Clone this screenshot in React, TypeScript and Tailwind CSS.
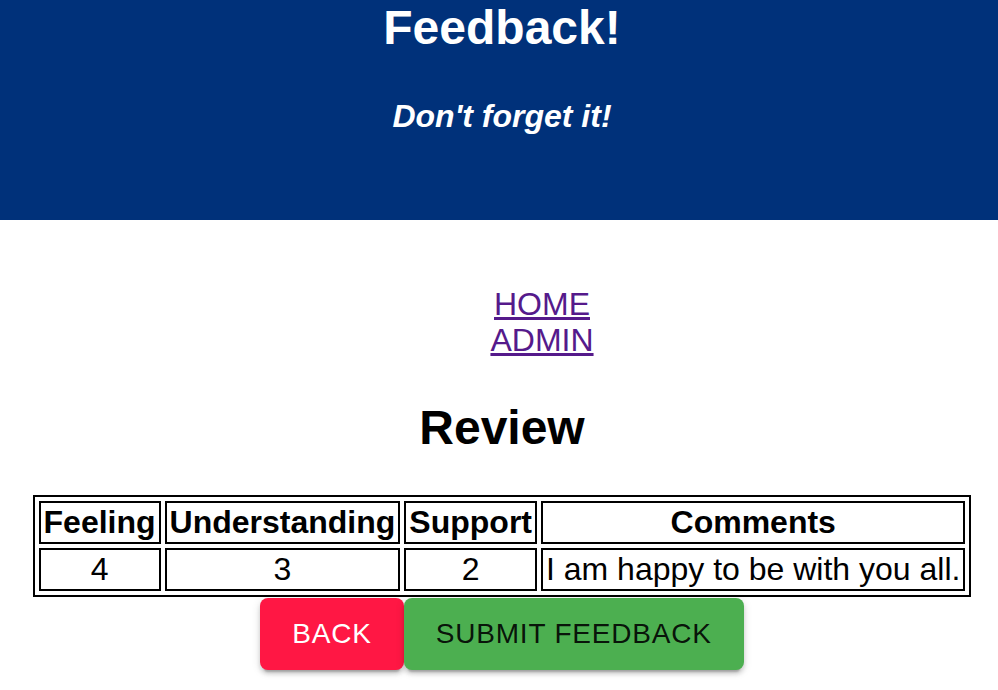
export default function App() {
  const scores = [
    { label: 'Feeling', value: '4' },
    { label: 'Understanding', value: '3' },
    { label: 'Support', value: '2' },
  ];

  return (
    <div className="min-h-screen bg-white text-black font-['Liberation_Sans',Arial,sans-serif]">
      {/* Header */}
      <header className="h-[220px] bg-[#00317a] text-white pl-[6px] text-center">
        <h1 className="text-[48px] leading-[55px] font-bold">Feedback!</h1>
        <p className="mt-[43px] text-[32px] leading-[37px] italic font-bold">Don't forget it!</p>
      </header>

      <div className="pl-[6px]">
        {/* Nav */}
        <ul className="mt-[66px] pl-[80px] text-center text-[32px] leading-[36px]">
          <li>
            <a href="#" className="text-[#551a8b] underline">HOME</a>
          </li>
          <li>
            <a href="#" className="text-[#551a8b] underline">ADMIN</a>
          </li>
        </ul>

        <h2 className="mt-[42px] text-center text-[48px] leading-[55px] font-bold">Review</h2>

        {/* Review table */}
        <table className="mx-auto mt-[40px] border-separate border-spacing-[4px] border-2 border-black text-[32px] leading-[35px]">
          <thead>
            <tr>
              {scores.map((s) => (
                <th key={s.label} className="border-2 border-black px-[3px] py-[2px] font-bold">
                  {s.label}
                </th>
              ))}
              <th className="border-2 border-black px-[3px] py-[2px] font-bold">Comments</th>
            </tr>
          </thead>
          <tbody>
            <tr>
              {scores.map((s) => (
                <td key={s.label} className="border-2 border-black px-[3px] py-[2px] text-center">
                  {s.value}
                </td>
              ))}
              <td className="border-2 border-black px-[3px] py-[2px]">I am happy to be with you all.</td>
            </tr>
          </tbody>
        </table>

        {/* Buttons */}
        <div className="flex justify-center pt-[1px]">
          <button className="h-[72px] px-[32px] rounded-[8px] bg-[#ff1744] text-white text-[28px] tracking-[0.8px] uppercase shadow-[0_6px_2px_-4px_rgba(0,0,0,0.2),0_4px_4px_0_rgba(0,0,0,0.14),0_2px_10px_0_rgba(0,0,0,0.12)]">
            Back
          </button>
          <button className="h-[72px] px-[32px] rounded-[8px] bg-[#4caf50] text-black/90 text-[28px] tracking-[0.8px] uppercase shadow-[0_6px_2px_-4px_rgba(0,0,0,0.2),0_4px_4px_0_rgba(0,0,0,0.14),0_2px_10px_0_rgba(0,0,0,0.12)]">
            Submit Feedback
          </button>
        </div>
      </div>
    </div>
  );
}
